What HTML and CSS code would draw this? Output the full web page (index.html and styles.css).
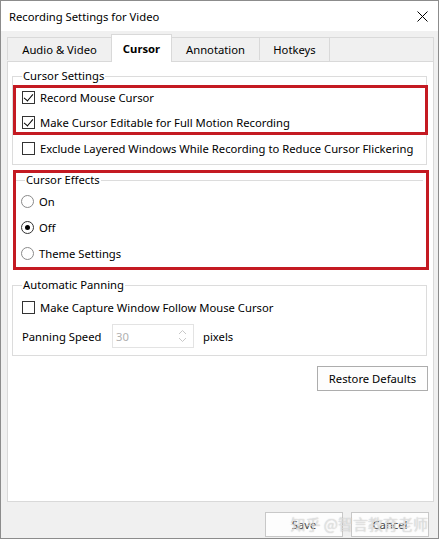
FILE: index.html
```html
<!DOCTYPE html>
<html lang="en">
<head>
    <meta charset="UTF-8" />
    <title>Recording Settings for Video</title>
    <link rel="stylesheet" href="styles.css">
</head>
<body>

<div class="window">
    <div class="titlebar">
        <span>Recording Settings for Video</span>
        <svg class="close" width="11" height="11" viewBox="0 0 11 11">
            <path d="M0.5 0.5 L10.5 10.5 M10.5 0.5 L0.5 10.5" stroke="#000" stroke-width="1" fill="none"/>
        </svg>
    </div>

    <div class="client">
        <div class="tabs">
            <div class="tab">Audio &amp; Video</div>
            <div class="tab active">Cursor</div>
            <div class="tab">Annotation</div>
            <div class="tab">Hotkeys</div>
            <div class="tab-fill"></div>
        </div>

        <div class="panel">
            <fieldset class="group first">
                <legend>Cursor Settings</legend>
                <div class="mark mark-rows">
                    <label class="row"><span class="check on"></span>Record Mouse Cursor</label>
                    <label class="row"><span class="check on"></span>Make Cursor Editable for Full Motion Recording</label>
                </div>
                <label class="row plain"><span class="check"></span>Exclude Layered Windows While Recording to Reduce Cursor Flickering</label>
            </fieldset>

            <div class="mark mark-group">
                <fieldset class="group inner">
                    <legend>Cursor Effects</legend>
                    <label class="row"><span class="radio"></span>On</label>
                    <label class="row"><span class="radio on"></span>Off</label>
                    <label class="row"><span class="radio"></span>Theme Settings</label>
                </fieldset>
            </div>

            <fieldset class="group panning">
                <legend>Automatic Panning</legend>
                <label class="row plain"><span class="check"></span>Make Capture Window Follow Mouse Cursor</label>
                <div class="speed">
                    <span class="speed-label">Panning Speed</span>
                    <div class="spin">
                        <span>30</span>
                        <svg width="9" height="16" viewBox="0 0 9 16">
                            <path d="M1 6 L4.5 2.5 L8 6 M1 10 L4.5 13.5 L8 10" stroke="#c8c8c8" stroke-width="1" fill="none"/>
                        </svg>
                    </div>
                    <span>pixels</span>
                </div>
            </fieldset>

            <div class="restore-row">
                <button class="btn restore">Restore Defaults</button>
            </div>
        </div>

        <div class="footer">
            <button class="btn">Save</button>
            <button class="btn">Cancel</button>
            <div class="watermark">知乎 @智言教育老师</div>
        </div>
    </div>
</div>

</body>
</html>
```

FILE: styles.css
```css
* { box-sizing: border-box; }
body {
    margin: 0;
    width: 439px;
    height: 544px;
    background: #fff;
    font-family: 'Noto Sans', 'Liberation Sans', sans-serif;
    font-size: 11.25px;
    color: #000;
}
.window {
    width: 439px;
    height: 539px;
    border: 1px solid #8c8c8c;
    display: flex;
    flex-direction: column;
}
.titlebar {
    height: 30px;
    background: #fff;
    display: flex;
    align-items: center;
    justify-content: space-between;
    padding: 0 10px 0 8px;
    font-size: 11.25px;
}
.close { display: block; }
.client {
    flex: 1;
    background: #f0f0f0;
    padding: 3px 4px 0 6px;
    display: flex;
    flex-direction: column;
}
.tabs {
    display: flex;
    height: 27px;
    position: relative;
    z-index: 1;
}
.tab {
    margin-top: 3px;
    height: 23px;
    padding: 1px 10px 0;
    border: 1px solid #d9d9d9;
    border-right: none;
    border-bottom: none;
    display: flex;
    align-items: center;
    justify-content: center;
    color: #000;
}
.tab:nth-child(1) { width: 104px; }
.tab:nth-child(2) { width: 61px; }
.tab:nth-child(3) { width: 88px; }
.tab:nth-child(4) { width: 70px; }
.tab.active {
    margin-top: 0;
    height: 28px;
    padding-top: 0;
    background: #fff;
    font-weight: bold;
    border-right: 1px solid #d9d9d9;
    margin-right: -1px;
}
.tab-fill {
    flex: 1;
    margin-top: 3px;
    border: 1px solid #d9d9d9;
    border-bottom: none;
}
.panel {
    flex: 1;
    background: #fff;
    border: 1px solid #d9d9d9;
    padding: 0 6px 0 4px;
}
.group {
    margin: 0;
    padding: 0;
    border: 1px solid #dcdcdc;
    min-width: 0;
}
.group legend {
    margin-left: 9px;
    padding: 0 1px;
    line-height: 14px;
    height: 14px;
}
.first {
    margin-top: 7px;
    padding: 2px 0 6px 0;
}
.mark {
    border: 3px solid #c41a22;
}
.mark-rows {
    height: 50px;
    margin-right: -2px;
    padding-left: 6px;
    display: flex;
    flex-direction: column;
    gap: 5px;
}
.row {
    height: 20px;
    display: flex;
    align-items: center;
    gap: 5px;
    white-space: nowrap;
}
.row.plain {
    padding-left: 9px;
}
.first .row.plain { margin-top: 3px; }
.check {
    width: 13px;
    height: 13px;
    border: 1px solid #333;
    background: #fff;
    flex: none;
    position: relative;
}
.check.on::after {
    content: "";
    position: absolute;
    left: 3px;
    top: 0px;
    width: 4px;
    height: 8px;
    border: solid #000;
    border-width: 0 1.5px 1.5px 0;
    transform: rotate(40deg);
}
.radio {
    width: 13px;
    height: 13px;
    border: 1px solid #8a8a8a;
    border-radius: 50%;
    background: #fff;
    flex: none;
    display: flex;
    align-items: center;
    justify-content: center;
}
.radio.on { border-color: #333; }
.radio.on::after {
    content: "";
    width: 5px;
    height: 5px;
    border-radius: 50%;
    background: #000;
}
.mark-group {
    margin: 5px -2px 0 1px;
    height: 100px;
}
.inner {
    border: none;
    border-top: 1px solid #dcdcdc;
    margin-right: 3px;
    padding: 4px 0 0 5px;
    display: flex;
    flex-direction: column;
    gap: 6px;
}
.inner legend { margin-left: 4px; }
.panning {
    margin-top: 8px;
    padding: 5px 0 7px 0;
}
.speed {
    display: flex;
    align-items: center;
    height: 24px;
    margin-top: 7px;
    padding-left: 9px;
}
.speed-label { width: 90px; }
.spin {
    width: 82px;
    height: 24px;
    border: 1px solid #e3e3e3;
    display: flex;
    align-items: center;
    justify-content: space-between;
    padding: 0 6px 0 3px;
    color: #b0b0b0;
    margin-right: 9px;
}
.spin svg { display: block; }
.restore-row {
    display: flex;
    justify-content: flex-end;
    margin: 10px -1px 0 0;
}
.btn {
    font-family: inherit;
    font-size: 11.25px;
    color: #000;
    background: #fdfdfd;
    border: 1px solid #adadad;
    height: 25px;
    padding: 0;
}
.restore { width: 111px; }
.footer {
    height: 36px;
    display: flex;
    justify-content: flex-end;
    align-items: flex-end;
    gap: 8px;
    padding: 0 5px 1px 0;
    position: relative;
}
.footer .btn {
    width: 78px;
    color: #444;
    border-color: #c8c8c8;
}
.watermark {
    position: absolute;
    right: 6px;
    bottom: 4px;
    font-family: 'Noto Sans CJK SC', sans-serif;
    font-size: 15px;
    color: rgba(255, 255, 255, 0.5);
    text-shadow: 0 0 1px rgba(150, 150, 150, 0.7);
    white-space: nowrap;
    pointer-events: none;
}
```
